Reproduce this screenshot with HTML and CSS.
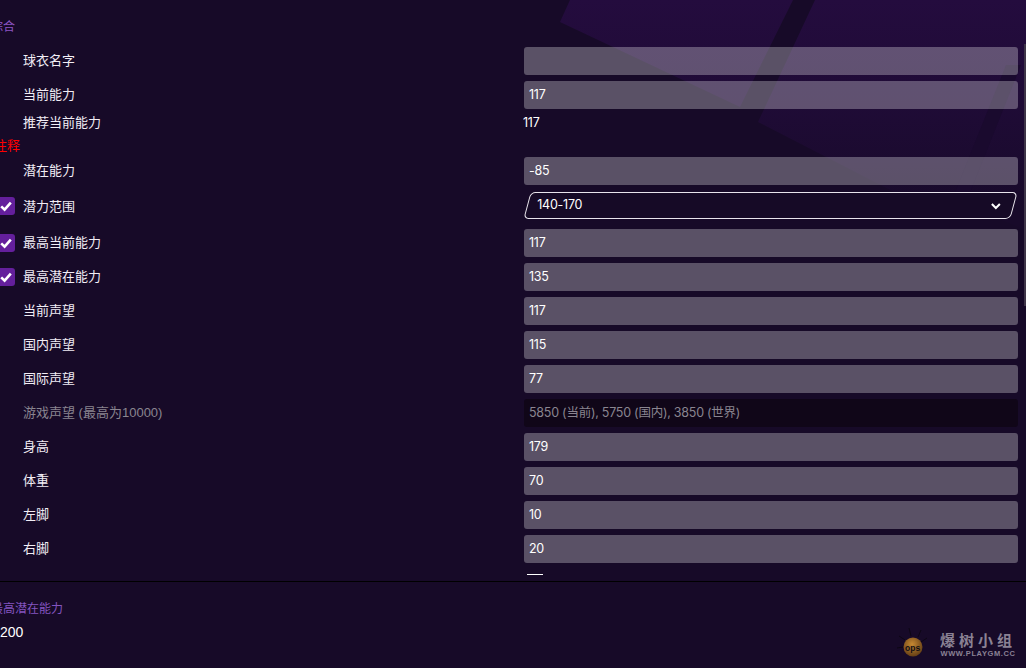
FILE: index.html
```html
<!DOCTYPE html>
<html lang="zh-CN">
<head>
<meta charset="utf-8">
<title>球员编辑</title>
<link rel="stylesheet" href="styles.css">
</head>
<body>
<svg class="backdrop" viewBox="0 0 1026 668" width="1026" height="668" aria-hidden="true">
  <defs>
    <linearGradient id="fade" gradientUnits="userSpaceOnUse" x1="0" y1="0" x2="0" y2="210">
      <stop offset="0" stop-color="#240c3e"/>
      <stop offset=".5" stop-color="#1f0b36"/>
      <stop offset="1" stop-color="#180a2a"/>
    </linearGradient>
  </defs>
  <polygon fill="url(#fade)" points="560,22 570,0 793,0 740,107"/>
  <polygon fill="url(#fade)" points="758,122 815,0 1026,0 1026,230 965,205 900,195"/>
  <polygon class="band" points="1006,65 1021,65 965,205 950,205"/>
</svg>
<div class="page">
  <div class="scroller">
    <div class="panel">
      <h2 class="section-title">综合</h2>
      <div class="row"><label class="label">球衣名字</label><div class="input"></div></div>
      <div class="row"><label class="label">当前能力</label><div class="input">117</div></div>
      <div class="row row-plain"><label class="label">推荐当前能力</label><div class="plain">117</div></div>
      <div class="note">注释</div>
      <div class="row"><label class="label">潜在能力</label><div class="input">-85</div></div>
      <div class="row row-select">
        <span class="check"><svg viewBox="0 0 18 18" width="18" height="18"><path d="M4.2 9.4l3.4 3.3 6.2-7" /></svg></span>
        <label class="label">潜力范围</label>
        <div class="select"><span class="select-value">140-170</span><svg class="chev" viewBox="0 0 12 8" width="12" height="8"><path d="M2 2l4 4 4-4"/></svg></div>
      </div>
      <div class="row">
        <span class="check"><svg viewBox="0 0 18 18" width="18" height="18"><path d="M4.2 9.4l3.4 3.3 6.2-7" /></svg></span>
        <label class="label">最高当前能力</label><div class="input">117</div>
      </div>
      <div class="row">
        <span class="check"><svg viewBox="0 0 18 18" width="18" height="18"><path d="M4.2 9.4l3.4 3.3 6.2-7" /></svg></span>
        <label class="label">最高潜在能力</label><div class="input">135</div>
      </div>
      <div class="row"><label class="label">当前声望</label><div class="input">117</div></div>
      <div class="row"><label class="label">国内声望</label><div class="input">115</div></div>
      <div class="row"><label class="label">国际声望</label><div class="input">77</div></div>
      <div class="row is-disabled"><label class="label">游戏声望 (最高为10000)</label><div class="input">5850 (当前), 5750 (国内), 3850 (世界)</div></div>
      <div class="row"><label class="label">身高</label><div class="input">179</div></div>
      <div class="row"><label class="label">体重</label><div class="input">70</div></div>
      <div class="row"><label class="label">左脚</label><div class="input">10</div></div>
      <div class="row"><label class="label">右脚</label><div class="input">20</div></div>
      <div class="row row-next"><div class="next-mark"></div></div>
    </div>
    <div class="scrollbar"></div>
  </div>
  <footer class="footer">
    <div class="footer-title">最高潜在能力</div>
    <div class="footer-value">200</div>
  </footer>
</div>
<div class="watermark">
  <svg class="wm-ball" viewBox="0 0 44 40" width="44" height="40"><defs><radialGradient id="ball" cx="45%" cy="35%" r="65%"><stop offset="0" stop-color="#f2a935"/><stop offset="1" stop-color="#7a4d12"/></radialGradient></defs><g stroke="#0b0610" stroke-width="1" fill="none"><path d="M8 14l6 4M18 6l2 8M30 8l-3 7M36 16l-6 4M6 26l6-1"/></g><circle cx="22" cy="25" r="9.5" fill="url(#ball)"/></svg>
  <span class="wm-ball-text">ops</span>
  <div class="wm-text"><div class="wm-cn">爆树小组</div><div class="wm-en">WWW.PLAYGM.CC</div></div>
</div>
</body>
</html>
```
FILE: styles.css
```css
* { box-sizing: border-box; }
html, body { margin: 0; height: 100%; overflow: hidden; }
body {
  position: relative;
  background: #170a28;
  color: #fff;
  font-family: "Liberation Sans", "Noto Sans CJK SC", sans-serif;
  font-size: 13px;
}
.backdrop { position: absolute; left: 0; top: 0; }
.band { fill: #1a0a2e; }
.page { position: relative; height: 668px; display: flex; flex-direction: column; }
.scroller { position: relative; height: 582px; overflow: hidden; border-bottom: 1px solid #000; }
.panel { margin-left: -9px; padding-top: 19px; width: 1027px; }
.section-title { margin: 0 0 11px; height: 17px; line-height: 17px; font-size: 12px; font-weight: 400; color: #8d55c4; }
.row { display: flex; align-items: center; min-height: 28px; margin-bottom: 6px; padding-left: 32px; position: relative; }
.row-plain { min-height: 15px; height: 15px; margin-bottom: 6px; }
.row-select { margin-top: 7px; margin-bottom: 10px; min-height: 27px; }
.label { width: 501px; flex: none; color: #f1edf5; padding-bottom: 4px; }
.row-select .label { padding-bottom: 0; }
.row-plain .label { padding-bottom: 2px; }
.input { flex: none; width: 494px; height: 28px; line-height: 27px; padding: 0 5px; background: rgba(255,255,255,.29); border-radius: 3px; color: #fff; font-family: Inter, "Noto Sans CJK SC", sans-serif; font-size: 12.5px; letter-spacing: -.25px; }
.plain { color: #fff; margin-left: -1px; font-family: Inter, "Noto Sans CJK SC", sans-serif; font-size: 12.5px; letter-spacing: -.25px; }
.note { height: 18px; line-height: 20px; margin-bottom: 3px; margin-left: 3px; color: #f00; font-size: 13px; }
.check { position: absolute; left: 6px; top: 50%; margin-top: -9px; width: 18px; height: 18px; border-radius: 3px; background: #641f9c; }
.check svg { display: block; fill: none; stroke: #fff; stroke-width: 2.6; }
.select { flex: none; width: 487px; margin-left: 2.5px; height: 27px; padding: 0 11px 0 9px; display: flex; align-items: center; justify-content: space-between; background: #160a26; border: 1.5px solid #e8e4ec; border-radius: 5px; transform: skewX(-15deg); }
.select-value { transform: skewX(15deg); font-family: Inter, sans-serif; font-size: 12.5px; letter-spacing: -.25px; margin-top: -2px; }
.chev { transform: skewX(15deg); fill: none; stroke: #fff; stroke-width: 2; }
.is-disabled .label { color: #8a8590; }
.is-disabled .input { background: #100618; color: #8a8590; }
.row-next { min-height: 8px; }
.next-mark { margin-left: 504px; margin-top: 5px; width: 16px; height: 1px; background: #fff; align-self: flex-start; }
.scrollbar { position: absolute; right: 0; top: 44px; width: 2px; height: 262px; background: #3f3549; }
.footer { padding: 19px 0 0; margin-left: -9px; }
.footer-title { font-size: 12px; line-height: 16px; color: #8455c0; }
.footer-value { margin-top: 7px; margin-left: 9px; font-size: 14px; line-height: 16px; color: #fff; }
.watermark { position: absolute; left: 938px; top: 630px; width: 80px; opacity: .8; }
.wm-ball { position: absolute; left: -47px; top: -8px; }
.wm-ball-text { position: absolute; left: -33px; top: 13px; font: 700 8.5px "Liberation Sans", sans-serif; color: #111; }
.wm-text { text-align: center; }
.wm-cn { font: 700 15px/19px "Noto Sans CJK SC", sans-serif; letter-spacing: 4px; color: #a8a0b0; }
.wm-en { font: 700 7.5px/9px "Liberation Sans", sans-serif; letter-spacing: .6px; color: #a8a0b0; white-space: nowrap; }
```
